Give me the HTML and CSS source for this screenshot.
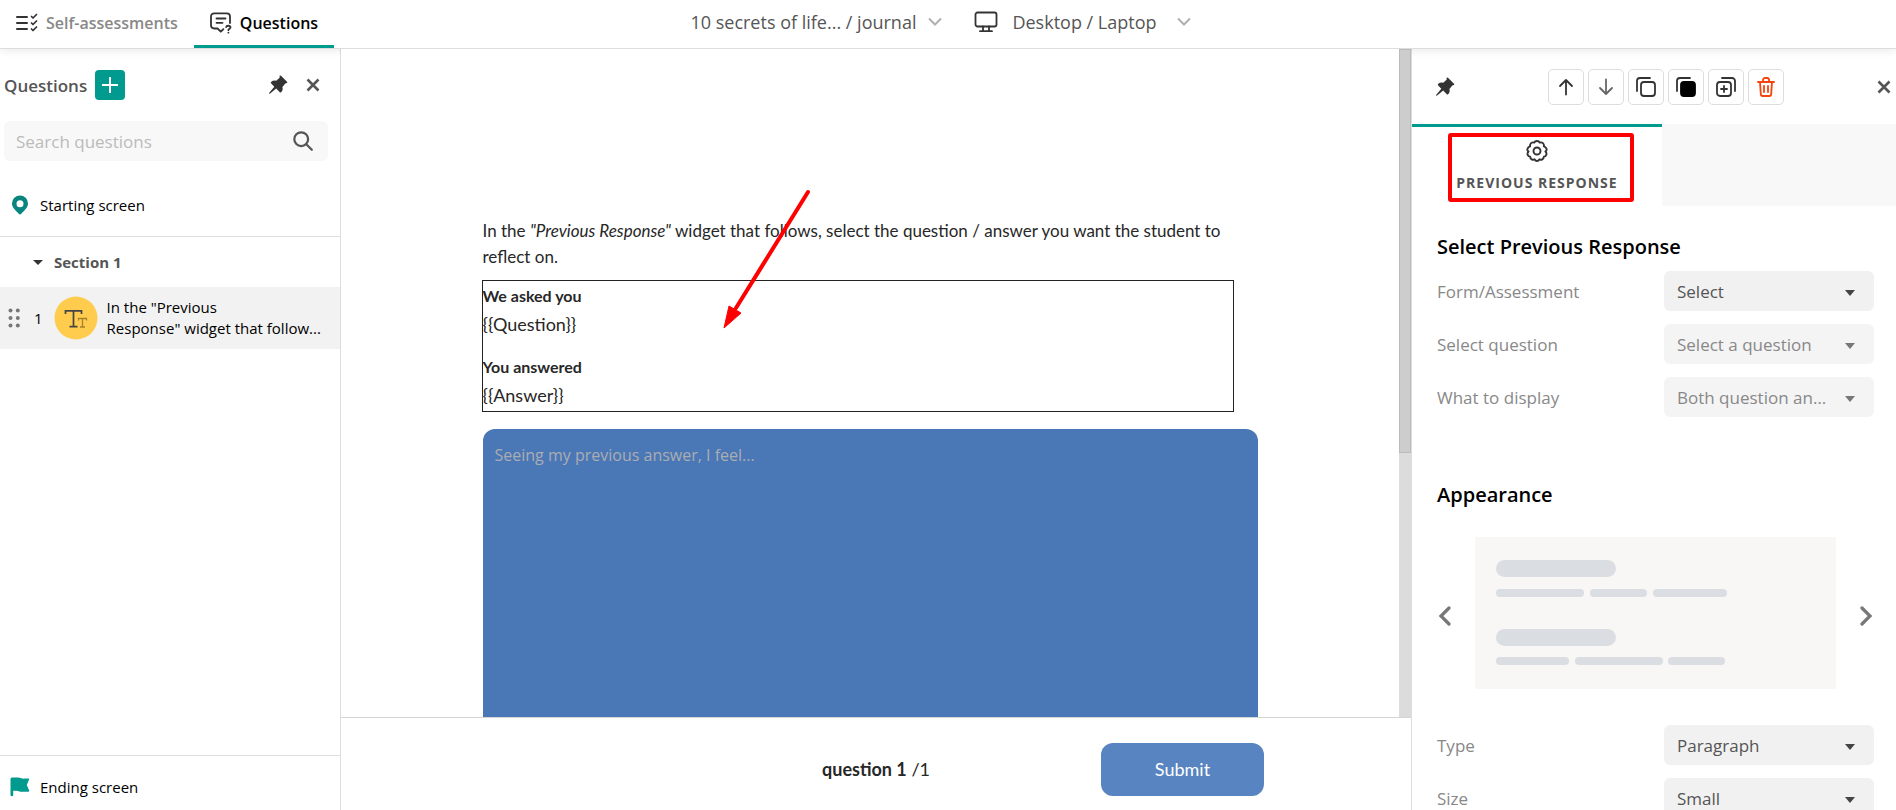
FILE: index.html
```html
<!DOCTYPE html>
<html lang="en">
<head>
<meta charset="utf-8">
<title>Questions</title>
<link rel="stylesheet" href="styles.css">
</head>
<body>
<div class="app">
  <header class="topbar">
    <nav class="tabs">
      <a class="tab" href="#assessments">
        <svg width="22" height="20" viewBox="0 0 22 20" fill="none" stroke="#333" stroke-width="2" stroke-linecap="round" stroke-linejoin="round"><path d="M1 4h10M1 10h10M1 16h10"/><path stroke-width="1.700" d="M15.500 3.500l1.500 1.500 3.500-3.500M15.500 10l1.500 1.500L20.500 8M15.500 16l1.500 1.500 3.500-3.500"/></svg>
        <span>Self-assessments</span>
      </a>
      <a class="tab tab-active" href="#questions">
        <svg width="22" height="22" viewBox="0 0 22 22" fill="none" stroke="#333" stroke-width="1.800" stroke-linecap="round" stroke-linejoin="round"><path d="M20 11V4.500A3.200 3.200 0 0 0 16.800 1.300H4.200A3.200 3.200 0 0 0 1 4.500v8.800a3.200 3.200 0 0 0 3.200 3.200h3.300l3.300 3.200 2.600-2.600"/><path d="M6.500 6.500h9M6.500 10.800h6"/><path d="M16.200 15.200c.2-2 4.400-1.900 4.300.1 0 1.400-2.100 1.500-2.100 2.900M18.400 20.600v.1"/></svg>
        <span>Questions</span>
      </a>
    </nav>
    <div class="context">
      <button class="context-btn" type="button">10 secrets of life... / journal
        <svg class="chevron" width="14" height="10" viewBox="0 0 14 10" fill="none" stroke="#b0b0b0" stroke-width="2"><path d="M1 1.500l6 6 6-6"/></svg>
      </button>
      <button class="context-btn context-device" type="button">
        <svg width="24" height="22" viewBox="0 0 24 22" fill="none" stroke="#333" stroke-width="1.800" stroke-linecap="round"><rect x="1.500" y="1.500" width="21" height="14" rx="2"/><path d="M9 15.500V20M15 15.500V20M6 20.200h12"/></svg>
        Desktop / Laptop
        <svg class="chevron" width="14" height="10" viewBox="0 0 14 10" fill="none" stroke="#b0b0b0" stroke-width="2"><path d="M1 1.500l6 6 6-6"/></svg>
      </button>
    </div>
  </header>

  <aside class="sidebar">
    <div class="side-head">
      <h2>Questions</h2>
      <button class="add" type="button" aria-label="Add question">
        <svg width="18" height="18" viewBox="0 0 18 18" stroke="#fff" stroke-width="2"><path d="M9 1v16M1 9h16"/></svg>
      </button>
      <button class="icon-btn side-pin" type="button" aria-label="Pin panel">
        <svg width="20" height="20" viewBox="0 0 20 20" fill="#333"><path d="M11.600.8Q12.200 0 13 .8l6 6q.7.8-.2 1.300l-1.500.4-2.900 3.400q1 3.200-1.400 5.400-.6.400-1.200-.1L8.200 13.600l-6.400 5.200q-.9.300-.7-.7l5.200-6.400L3 8.300q-.5-.7 0-1.200 2.300-2 5.200-1.300l3.400-3z"/></svg>
      </button>
      <button class="icon-btn" type="button" aria-label="Close panel">
        <svg width="14" height="14" viewBox="0 0 14 14" stroke="#555" stroke-width="2.600"><path d="M1.500 1.500l11 11M12.500 1.500l-11 11"/></svg>
      </button>
    </div>
    <div class="search">
      <input type="search" placeholder="Search questions" aria-label="Search questions">
      <svg width="20" height="20" viewBox="0 0 20 20" fill="none" stroke="#555" stroke-width="2.200" stroke-linecap="round"><circle cx="8.200" cy="8.200" r="6.900"/><path d="M13.300 13.300l5.500 5.500"/></svg>
    </div>
    <a class="screen-row starting" href="#start">
      <svg width="20" height="20" viewBox="-1 0 20 20"><path fill="#07857e" fill-rule="evenodd" d="M9 .5a8 8 0 0 1 8 8c0 4.500-4 7-6.700 10.300q-1.300 1.200-2.600 0C5 15.500 1 13 1 8.500a8 8 0 0 1 8-8zm0 4.700a3.500 3.500 0 1 0 0 7 3.500 3.500 0 0 0 0-7z"/></svg>
      <span>Starting screen</span>
    </a>
    <button class="section" type="button">
      <svg width="10" height="5" viewBox="0 0 10 5" fill="#333"><path d="M0 0h10L5 5z"/></svg>
      Section 1
    </button>
    <a class="question" href="#q1">
      <svg width="12" height="20" viewBox="0 0 12 20" fill="#777"><circle cx="2.500" cy="2.500" r="2"/><circle cx="9.800" cy="2.500" r="2"/><circle cx="2.500" cy="10" r="2"/><circle cx="9.800" cy="10" r="2"/><circle cx="2.500" cy="17.500" r="2"/><circle cx="9.800" cy="17.500" r="2"/></svg>
      <span class="number">1</span>
      <svg class="badge" width="44" height="44" viewBox="0 0 44 44" fill="none"><circle cx="22" cy="22" r="21.500" fill="#ffcc4d"/><path stroke="#444" stroke-width="1.700" d="M11.500 18v-3.200h16V18M19.500 14.800v15.700M15.500 30.700h8"/><path stroke="#a5822d" stroke-width="1.300" d="M24.500 24.500v-2h8v2M28.500 22.500V31M26 31h5"/></svg>
      <span class="question-text">In the "Previous<br>Response" widget that follow...</span>
    </a>
    <a class="screen-row ending" href="#end">
      <svg width="20" height="20" viewBox="0 0 20 20" fill="#009b8e"><path d="M.5 2q0-1.500 1.500-1.500l5 .1c4 0 4 1.400 8 1h3.300q1.200.1.700 1.100L16.800 8l2.400 5.500q.3 1.200-.9 1.300H12c-3 0-4-1.300-6-1H3.200V18q0 1.300-1.300 1.300T.5 18z"/></svg>
      <span>Ending screen</span>
    </a>
  </aside>

  <main class="stage">
    <div class="scroll-area">
      <div class="canvas">
        <div class="form">
          <p class="intro">In the <em>"Previous Response"</em> widget that follows, select the question / answer you want the student to reflect on.</p>
          <section class="previous">
            <h3>We asked you</h3>
            <p>{{Question}}</p>
            <h3>You answered</h3>
            <p>{{Answer}}</p>
          </section>
          <textarea class="answer" placeholder="Seeing my previous answer, I feel..." aria-label="Your answer"></textarea>
          <svg class="pointer" width="88" height="140" viewBox="0 0 88 140"><path d="M85 3L13 119" stroke="red" stroke-width="4" stroke-linecap="round"/><path d="M1 139l5-22 12 7z" fill="red" stroke="red"/></svg>
        </div>
      </div>
      <div class="track"><div class="thumb"></div></div>
    </div>
    <footer class="stage-foot">
      <span class="progress"><strong>question 1</strong> /1</span>
      <button class="submit" type="button">Submit</button>
    </footer>
  </main>

  <aside class="panel">
    <div class="panel-head">
      <button class="icon-btn" type="button" aria-label="Pin settings">
        <svg width="20" height="20" viewBox="0 0 20 20" fill="#333"><path d="M11.600.8Q12.200 0 13 .8l6 6q.7.8-.2 1.300l-1.500.4-2.900 3.400q1 3.200-1.400 5.400-.6.400-1.200-.1L8.200 13.600l-6.400 5.200q-.9.300-.7-.7l5.200-6.400L3 8.300q-.5-.7 0-1.200 2.300-2 5.200-1.300l3.400-3z"/></svg>
      </button>
      <div class="tools">
        <button class="tool" type="button" aria-label="Move up"><svg width="20" height="20" viewBox="0 0 20 20"><path d="M10 17.500V3M4 9l6-6 6 6"/></svg></button>
        <button class="tool tool-muted" type="button" aria-label="Move down"><svg width="20" height="20" viewBox="0 0 20 20"><path d="M10 2.500V17M4 11l6 6 6-6"/></svg></button>
        <button class="tool" type="button" aria-label="Copy"><svg width="20" height="20" viewBox="0 0 20 20"><rect x="5" y="5" width="14" height="14" rx="3"/><path d="M1 14V4a3 3 0 0 1 3-3h10"/></svg></button>
        <button class="tool" type="button" aria-label="Paste"><svg width="20" height="20" viewBox="0 0 20 20"><rect x="5" y="5" width="14" height="14" rx="3" fill="#000" stroke="#000"/><path d="M1 14V4a3 3 0 0 1 3-3h10"/></svg></button>
        <button class="tool" type="button" aria-label="Duplicate"><svg width="20" height="20" viewBox="0 0 20 20"><rect x="1" y="5" width="14" height="14" rx="3"/><path d="M19 14V4a3 3 0 0 0-3-3H6M8 9v6M5 12h6"/></svg></button>
        <button class="tool tool-danger" type="button" aria-label="Delete"><svg width="20" height="20" viewBox="0 0 20 20"><path d="M2 5h16M4 5l.8 12a2 2 0 0 0 2 2h6.400a2 2 0 0 0 2-2L16 5M7 5V3a2 2 0 0 1 2-2h2a2 2 0 0 1 2 2v2M8 9v6M12 9v6"/></svg></button>
      </div>
      <button class="icon-btn" type="button" aria-label="Close settings">
        <svg width="14" height="14" viewBox="0 0 14 14" stroke="#555" stroke-width="2.600"><path d="M1.500 1.500l11 11M12.500 1.500l-11 11"/></svg>
      </button>
    </div>
    <div class="panel-tabs">
      <button class="panel-tab" type="button">
        <span class="highlight">
          <svg width="22" height="22" viewBox="0 0 22 22" fill="none" stroke="#333" stroke-width="1.900" stroke-linejoin="round"><path d="M8.300 2.600Q9 1 11 1t2.700 1.600q1.800-.7 3.200.5t1 3.300Q20 7 20.500 8.800T19.400 11.600Q21 13 20.300 14.800T17.900 16.600Q17.900 18.400 16.300 19.300T13.500 19.300Q12.600 21 11 21T8.500 19.300Q7.300 20.200 5.700 19.300T4.100 16.600Q2.400 16.600 1.700 14.800T2.600 11.600Q.9 10.600 1.500 8.800T4.100 6.400Q3.700 4.300 5.100 3.100T8.300 2.600z"/><circle cx="11" cy="11" r="3.500"/></svg>
          <span class="panel-tab-label">PREVIOUS RESPONSE</span>
        </span>
      </button>
      <div class="panel-tab-empty"></div>
    </div>
    <div class="settings">
      <h2>Select Previous Response</h2>
      <div class="fields">
        <label for="form">Form/Assessment</label>
        <div class="select"><select id="form"><option>Select</option></select></div>
        <label for="question">Select question</label>
        <div class="select select-off"><select id="question" disabled><option>Select a question</option></select></div>
        <label for="display">What to display</label>
        <div class="select select-off"><select id="display" disabled><option>Both question and answer</option></select></div>
      </div>
      <h2 class="appearance">Appearance</h2>
      <div class="carousel">
        <button class="icon-btn" type="button" aria-label="Previous layout"><svg width="14" height="20" viewBox="0 0 14 20" fill="none" stroke="#777" stroke-width="3.200" stroke-linecap="round"><path d="M12 2L4 10l8 8"/></svg></button>
        <svg class="preview" viewBox="0 0 361 152" fill="#dadde2"><rect width="361" height="152" fill="#f8f7f6"/><rect x="21" y="23" width="120" height="17" rx="8.500"/><rect x="21" y="52" width="88" height="8" rx="4"/><rect x="115" y="52" width="57" height="8" rx="4"/><rect x="178" y="52" width="74" height="8" rx="4"/><rect x="21" y="92" width="120" height="17" rx="8.500"/><rect x="21" y="120" width="73" height="8" rx="4"/><rect x="100" y="120" width="88" height="8" rx="4"/><rect x="193" y="120" width="57" height="8" rx="4"/></svg>
        <button class="icon-btn" type="button" aria-label="Next layout"><svg width="14" height="20" viewBox="0 0 14 20" fill="none" stroke="#777" stroke-width="3.200" stroke-linecap="round"><path d="M2 2l8 8-8 8"/></svg></button>
      </div>
      <div class="fields">
        <label for="type">Type</label>
        <div class="select"><select id="type"><option>Paragraph</option></select></div>
        <label for="size">Size</label>
        <div class="select"><select id="size"><option>Small</option></select></div>
      </div>
    </div>
  </aside>
</div>
</body>
</html>
```

FILE: styles.css
```css
*, *::before, *::after { box-sizing: border-box; }
body {
  margin: 0;
  font-family: "Open Sans", "Noto Sans", sans-serif;
  font-size: 17px;
  color: #000;
  background: #fff;
  overflow: hidden;
}
h2, h3, p { margin: 0; }
svg { display: block; flex: none; }
a { color: inherit; text-decoration: none; }
button, input, select, textarea { font: inherit; color: inherit; }
button { border: 0; background: none; padding: 0; }

.app {
  display: grid;
  grid-template: 49px minmax(0, 1fr) / 341px minmax(0, 1fr) 485px;
  height: 100vh;
}

/* Top bar */
.topbar {
  grid-column: 1 / -1;
  display: grid;
  grid-template-columns: 1fr auto 1fr;
  border-bottom: 1px solid #ddd;
  box-shadow: 0 2px 8px rgba(0, 0, 0, .08);
  position: relative;
  z-index: 1;
  background: #fff;
}
.tabs { display: flex; }
.tab {
  display: flex;
  align-items: center;
  gap: 8px;
  padding: 0 16px;
  border-bottom: 3px solid transparent;
  font-size: 16px;
  font-weight: 600;
  color: #888;
}
.tab-active { color: #000; border-color: #009b8e; }
.context { display: flex; gap: 32px; padding: 0 15px 5px 0; color: #555; }
.context-btn { display: flex; align-items: center; gap: 12px; font-size: 18px; }
.context-device { gap: 14px; }
.context-device .chevron { margin-left: 6px; }

/* Question list */
.sidebar {
  display: flex;
  flex-direction: column;
  border-right: 1px solid #ddd;
}
.side-head {
  display: flex;
  align-items: center;
  height: 72px;
  padding: 0 20px 0 4px;
}
.side-head h2 { font-size: 17px; font-weight: 600; color: #555; }
.add {
  display: grid;
  place-items: center;
  width: 30px;
  height: 30px;
  margin-left: 8px;
  border-radius: 4px;
  background: #009b8e;
}
.side-pin { margin: 0 18px 0 auto; }
.search {
  display: flex;
  align-items: center;
  height: 40px;
  margin: 0 12px 0 4px;
  padding: 0 15px 0 12px;
  border-radius: 6px;
  background: #f8f8f8;
}
.search input { flex: 1; min-width: 0; border: 0; padding: 0; background: none; outline: 0; }
.search input::placeholder { color: #bbb; opacity: 1; }
.screen-row {
  display: flex;
  align-items: center;
  gap: 10px;
  padding-left: 10px;
  font-size: 15px;
}
.starting { height: 76px; padding-top: 12px; border-bottom: 1px solid #ddd; }
.ending { height: 55px; margin-top: auto; padding-top: 8px; border-top: 1px solid #ddd; }
.section {
  display: flex;
  align-items: center;
  gap: 11px;
  height: 50px;
  padding-left: 33px;
  font-size: 15px;
  font-weight: 700;
  color: #555;
}
.question {
  display: flex;
  align-items: center;
  height: 62px;
  padding-left: 8px;
  background: #f2f2f2;
  font-size: 15px;
  line-height: 21px;
}
.number { margin: 0 11px 0 14px; }
.question-text { margin-left: 9px; white-space: nowrap; }

/* Form preview */
.stage {
  display: flex;
  flex-direction: column;
  min-height: 0;
  position: relative;
  z-index: 2;
  font-family: Lato, sans-serif;
  color: #272727;
}
.scroll-area { flex: 1; min-height: 0; display: flex; }
.canvas { flex: 1; min-width: 0; overflow: hidden; padding-top: 169px; background: #fff; }
.form { position: relative; max-width: 775px; margin: 0 auto; }
.intro { max-width: 752px; font-size: 17px; line-height: 26px; }
.previous { margin: 11px 25px 18px 0; padding-bottom: 1px; outline: 1px solid #222; line-height: 29px; }
.previous h3 { font-size: 16px; font-weight: 700; }
.previous p { font-size: 18px; }
.previous p + h3 { margin-top: 13px; }
.answer {
  display: block;
  width: 100%;
  height: 420px;
  padding: 13px 12px;
  border: 0;
  border-radius: 12px;
  resize: none;
  outline: 0;
  background: #4a77b5;
  color: #fff;
  font-family: "Open Sans", sans-serif;
  font-size: 16px;
  line-height: 26px;
}
.answer::placeholder { color: #aaadb3; opacity: 1; }
.pointer { position: absolute; left: 240px; top: -29px; }
.track { width: 12px; background: #dcdcdc; }
.thumb { height: 60.5%; border: 1px solid #bbb; background: #cdcdcd; }
.stage-foot {
  display: grid;
  grid-template-columns: 1fr auto 1fr;
  align-items: center;
  height: 93px;
  padding-top: 10px;
  border-top: 1px solid #d5d5d5;
  font-size: 18px;
}
.progress { grid-column: 2; }
.submit {
  justify-self: end;
  width: 163px;
  height: 53px;
  margin-right: 147px;
  border-radius: 12px;
  background: #5884c1;
  color: #fff;
}

/* Settings panel */
.panel { min-height: 0; overflow: hidden; border-left: 1px solid #ddd; }
.panel-head {
  display: flex;
  align-items: center;
  justify-content: space-between;
  height: 75px;
  padding: 0 5px 0 23px;
}
.tools { display: flex; gap: 4px; }
.tool {
  display: grid;
  place-items: center;
  width: 36px;
  height: 36px;
  border: 1px solid #ddd;
  border-radius: 5px;
}
.tool svg { fill: none; stroke: #333; stroke-width: 1.8; stroke-linecap: round; stroke-linejoin: round; }
.tool-muted svg { stroke: #666; }
.tool-danger svg { stroke: #f4440b; }
.panel-tabs { display: grid; grid-template-columns: 250px 1fr; height: 82px; }
.panel-tab { border-top: 3px solid #009b8e; padding: 2px 0 0 8px; }
.panel-tab-empty { background: #f8f8f8; }
.highlight {
  display: flex;
  flex-direction: column;
  align-items: center;
  gap: 11px;
  width: 186px;
  height: 69px;
  margin: 0 auto;
  padding: 3px 8px 0 0;
  border: 4px solid red;
  border-radius: 3px;
}
.panel-tab-label { font-size: 14px; line-height: 20px; font-weight: 700; letter-spacing: 1px; color: #555; white-space: nowrap; }
.settings { padding: 26px 22px 0 25px; }
.settings h2 { font-size: 20px; font-weight: 600; line-height: 30px; }
.settings .appearance { margin-top: 63px; }
.fields {
  display: grid;
  grid-template-columns: 1fr 210px;
  align-items: center;
  row-gap: 13px;
  margin-top: 9px;
  color: #888;
}
.select { position: relative; }
.select select {
  appearance: none;
  display: block;
  width: 100%;
  height: 40px;
  padding: 0 40px 0 13px;
  border: 0;
  border-radius: 6px;
  background: #f1f1f1;
  color: #555;
  opacity: 1;
  text-overflow: ellipsis;
}
.select::after {
  content: "";
  position: absolute;
  right: 19px;
  top: 19px;
  border: 5px solid transparent;
  border-top: 6px solid #444;
  border-bottom: 0;
}
.select-off select { background: #f4f4f4; color: #888; }
.select-off::after { border-top-color: #777; }
.carousel {
  display: flex;
  align-items: center;
  gap: 24px;
  margin: 27px 0 36px;
}
.carousel .icon-btn { padding-top: 6px; }
.preview { flex: 1; min-width: 0; }
```
